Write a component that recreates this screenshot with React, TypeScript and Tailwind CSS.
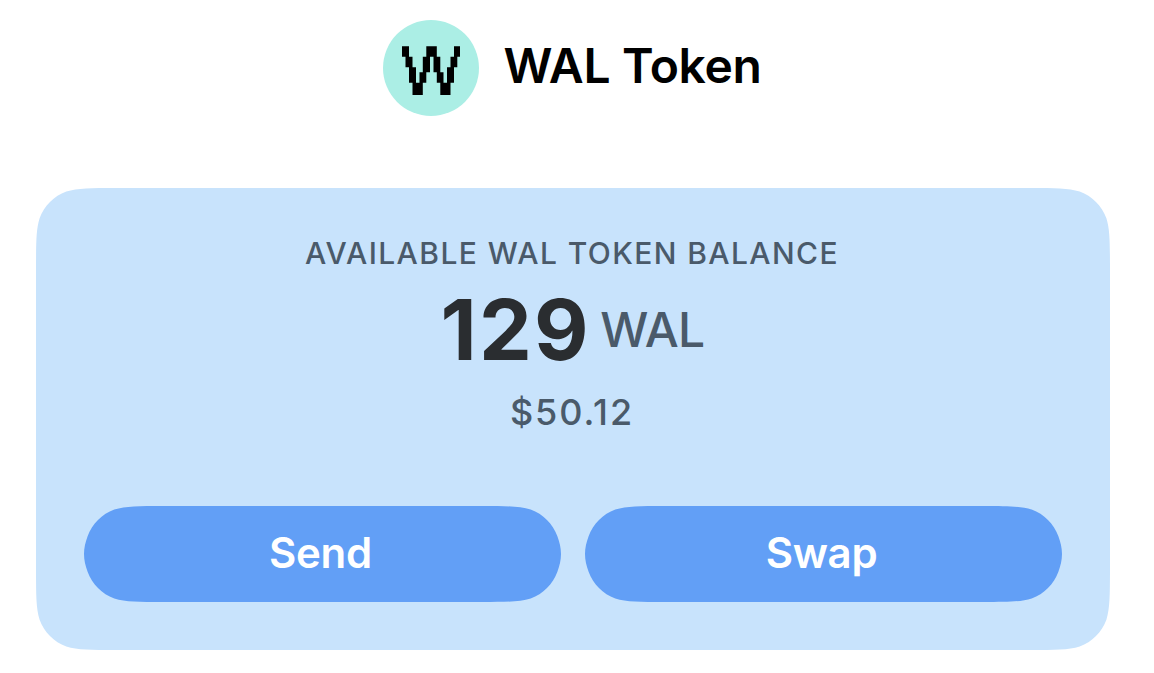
const K: [number, number][] = [
  [1.64, 0], [1.15, 0.003], [0.868407, 0], [0.63149, 0.07491],
  [0.37282, 0.16906], [0.16906, 0.37282], [0.07491, 0.63149],
  [0, 0.868407], [0.003, 1.15], [0, 1.64],
];
const PILL: [number, number][] = [...K.slice(0, 7), [0.03, 0.755], [0, 0.87], [0, 1]];

// Outline with continuous-curvature corners, used as a clip path.
function smooth(w: number, h: number, r: number, k: [number, number][]) {
  const corner = (fx: boolean, fy: boolean, reverse: boolean) => {
    const pts = k.map(([x, y]) => [fx ? w - x * r : x * r, fy ? h - y * r : y * r].map((n) => n.toFixed(2)).join(" "));
    if (reverse) pts.reverse();
    return `${pts[0]} C ${pts.slice(1).join(" ")}`;
  };
  return `path("M ${corner(false, false, true)} L ${corner(true, false, false)} L ${corner(true, true, true)} L ${corner(false, true, false)} Z")`;
}

function Logo() {
  return (
    <svg viewBox="0 0 96 96" className="size-24 shrink-0">
      <circle cx="48" cy="48" r="48" fill="#abeee5" />
      <path
        fill="#000"
        d="M19 26.3H26V36.8H29.5V47.3H33V62.8H36.5V52.3H39.8V36.8H43.3V26.3H53.8V36.8H57.3V52.3H60.5V62.8H64V47.3H67.5V36.8H71V26.3H77V36.8H74.3V47.3H71V62.8H67.5V75H57.3V62.8H53.8V52.3H50.5V36.8H47V52.3H43.3V62.8H39.8V75H29.5V62.8H26V47.3H22.5V36.8H19Z"
      />
    </svg>
  );
}

function ActionButton({ label }: { label: string }) {
  return (
    <button
      className="flex h-24 w-[477px] items-center justify-center bg-[#629ff6] pr-1 pb-0.5 text-[42px] leading-none font-semibold tracking-[-0.3px] text-white"
      style={{ clipPath: smooth(477, 96, 48, PILL) }}
    >
      {label}
    </button>
  );
}

export default function App() {
  return (
    <main className="h-[673px] w-[1154px] overflow-hidden bg-white pt-5 pl-9 font-['Inter',sans-serif]">
      <header className="flex h-24 w-[1074px] items-center justify-center gap-6">
        <Logo />
        <h1 className="pr-px pb-1 text-[48px] leading-none font-semibold tracking-[-0.33px] text-black">WAL Token</h1>
      </header>
      <section
        className="mt-[72px] flex h-[462px] w-[1074px] flex-col items-center bg-[#c8e3fc] px-12 pt-[47px] pb-12"
        style={{ clipPath: smooth(1074, 462, 48, K) }}
      >
        <p className="pr-0.5 text-[30px] leading-9 font-[450] tracking-[1.4px] text-[#4a5a6a]">AVAILABLE WAL TOKEN BALANCE</p>
        <div className="mt-2 flex h-[100px] items-center gap-[9.5px] pr-px">
          <span className="pt-0.5 text-[84px] leading-none font-bold tracking-[2.2px] text-[#2a2d30]">129</span>
          <span className="pt-0.5 text-[48px] leading-none font-medium tracking-[-0.7px] text-[#4a5a6a]">WAL</span>
        </div>
        <p className="mt-[11px] pr-0.5 text-[36px] leading-[44px] font-[450] tracking-[1.9px] text-[#4a5a6a]">$50.12</p>
        <div className="mt-auto flex gap-6">
          <ActionButton label="Send" />
          <ActionButton label="Swap" />
        </div>
      </section>
    </main>
  );
}
